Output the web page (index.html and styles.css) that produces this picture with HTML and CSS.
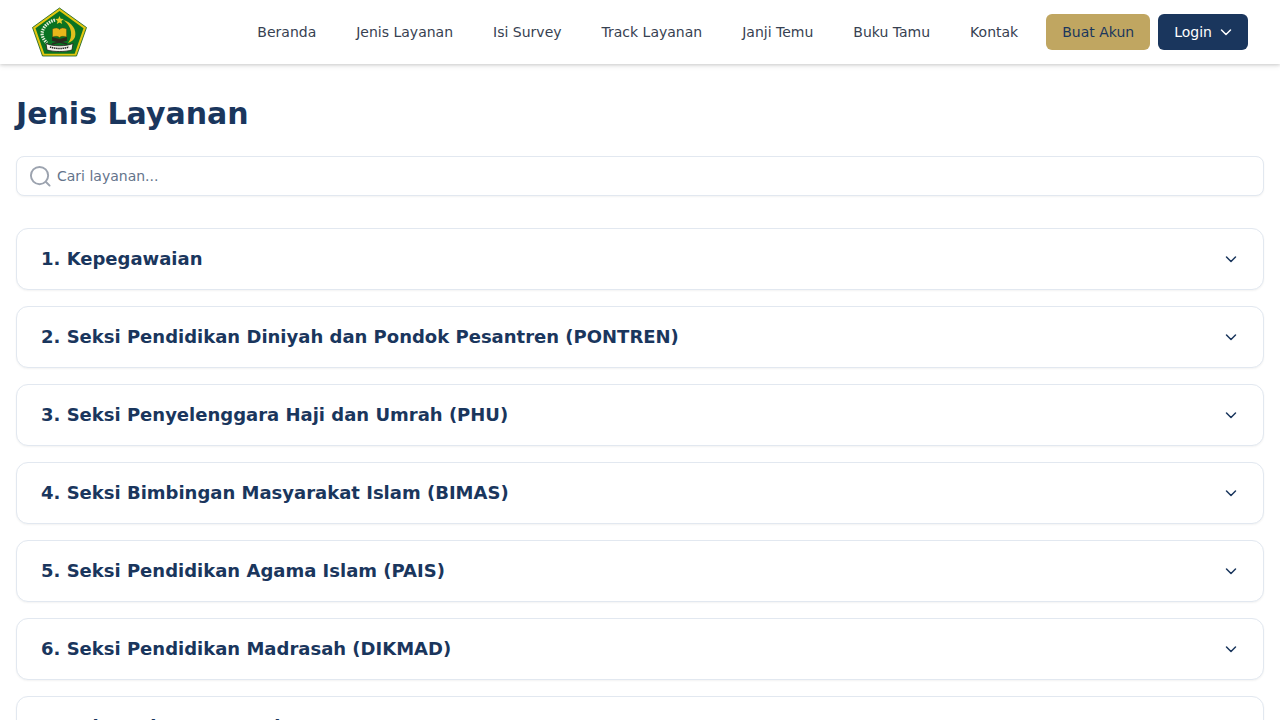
FILE: index.html
```html
<!DOCTYPE html>
<html lang="id">
<head>
<meta charset="utf-8">
<title>Jenis Layanan</title>
<link rel="stylesheet" href="styles.css">
</head>
<body>
<header class="navbar">
  <a class="logo" href="#" aria-label="Kementerian Agama">
    <svg class="logo-mark" width="56" height="50" viewBox="0 0 56 50">
      <polygon points="27.500,1 54.500,20.500 44.500,49 10.500,49 0.500,20.500" fill="#e3c60f" stroke="#0d5c1e" stroke-width="0.800"/>
      <polygon points="27.500,4 51.500,21.300 42.700,46.800 12.300,46.800 3.500,21.300" fill="#0a7322"/>
      <polygon points="27.500,9 28.700,11.800 31.800,12 29.400,14 30.200,17 27.500,15.400 24.800,17 25.600,14 23.200,12 26.300,11.800" fill="#e8cf2a"/>
      <path d="M31 13 C40 15 45 23 43 30 C42 33 39 35 36 36 C38.500 33 39.500 29 39 25 C38.500 20 35 15.500 31 13Z" fill="#e0c01e"/>
      <path d="M23 13 C16 15 11 20 10 26 C10 30 12 33 15 36" fill="none" stroke="#e8f0dc" stroke-width="3.200" stroke-dasharray="1.500 1"/>
      <path d="M20.500 22 C23 20.500 26 20.500 27.500 22.500 C29 20.500 32 20.500 34.500 22 L34.500 30 C32 29 29 29 27.500 30.500 C26 29 23 29 20.500 30Z" fill="#e9b71a" stroke="#5a4a10" stroke-width="0.500"/>
      <path d="M20 30 L27.500 32 L35 30 L35 32.500 L27.500 35 L20 32.500Z" fill="#2c2a1a"/>
      <path d="M20 33 L35 37 M35 33 L20 37" stroke="#2a2a20" stroke-width="1.300"/>
      <path d="M14 36.500 C21 39.500 34 39.500 41 36.500 L40 43 C33 45 22 45 15 43Z" fill="#f4f4ec" stroke="#1c1c14" stroke-width="0.800"/>
      <path d="M18 40 C24 42 31 42 37 40" fill="none" stroke="#222" stroke-width="1.500" stroke-dasharray="1.400 0.700"/>
    </svg>
  </a>
  <nav class="nav">
    <a class="nav-link" href="#">Beranda</a>
    <a class="nav-link" href="#">Jenis Layanan</a>
    <a class="nav-link" href="#">Isi Survey</a>
    <a class="nav-link" href="#">Track Layanan</a>
    <a class="nav-link" href="#">Janji Temu</a>
    <a class="nav-link" href="#">Buku Tamu</a>
    <a class="nav-link" href="#">Kontak</a>
  </nav>
  <div class="actions">
    <a class="btn btn-gold" href="#">Buat Akun</a>
    <a class="btn btn-navy" href="#">Login
      <svg class="btn-chevron" width="12" height="12" viewBox="0 0 24 24" fill="none" stroke="currentColor" stroke-width="3" stroke-linecap="round" stroke-linejoin="round"><path d="M3 8l9 9 9-9"/></svg>
    </a>
  </div>
</header>
<main class="page">
  <h1 class="title">Jenis Layanan</h1>
  <label class="search">
    <svg class="search-icon" width="23" height="23" viewBox="0 0 24 24" fill="none" stroke="#9ca3af" stroke-width="2" stroke-linecap="round"><circle cx="11" cy="11" r="9"/><path d="M18 18l3.500 3.500"/></svg>
    <input class="search-input" type="text" placeholder="Cari layanan...">
  </label>
  <section class="list">
    <div class="item"><span>1. Kepegawaian</span><svg class="chevron" width="12" height="12" viewBox="0 0 24 24" fill="none" stroke="#1a365d" stroke-width="3" stroke-linecap="round" stroke-linejoin="round"><path d="M3 8l9 9 9-9"/></svg></div>
    <div class="item"><span>2. Seksi Pendidikan Diniyah dan Pondok Pesantren (PONTREN)</span><svg class="chevron" width="12" height="12" viewBox="0 0 24 24" fill="none" stroke="#1a365d" stroke-width="3" stroke-linecap="round" stroke-linejoin="round"><path d="M3 8l9 9 9-9"/></svg></div>
    <div class="item"><span>3. Seksi Penyelenggara Haji dan Umrah (PHU)</span><svg class="chevron" width="12" height="12" viewBox="0 0 24 24" fill="none" stroke="#1a365d" stroke-width="3" stroke-linecap="round" stroke-linejoin="round"><path d="M3 8l9 9 9-9"/></svg></div>
    <div class="item"><span>4. Seksi Bimbingan Masyarakat Islam (BIMAS)</span><svg class="chevron" width="12" height="12" viewBox="0 0 24 24" fill="none" stroke="#1a365d" stroke-width="3" stroke-linecap="round" stroke-linejoin="round"><path d="M3 8l9 9 9-9"/></svg></div>
    <div class="item"><span>5. Seksi Pendidikan Agama Islam (PAIS)</span><svg class="chevron" width="12" height="12" viewBox="0 0 24 24" fill="none" stroke="#1a365d" stroke-width="3" stroke-linecap="round" stroke-linejoin="round"><path d="M3 8l9 9 9-9"/></svg></div>
    <div class="item"><span>6. Seksi Pendidikan Madrasah (DIKMAD)</span><svg class="chevron" width="12" height="12" viewBox="0 0 24 24" fill="none" stroke="#1a365d" stroke-width="3" stroke-linecap="round" stroke-linejoin="round"><path d="M3 8l9 9 9-9"/></svg></div>
    <div class="item"><span>7. Sub Bagian Tata Usaha</span><svg class="chevron" width="12" height="12" viewBox="0 0 24 24" fill="none" stroke="#1a365d" stroke-width="3" stroke-linecap="round" stroke-linejoin="round"><path d="M3 8l9 9 9-9"/></svg></div>
  </section>
</main>
</body>
</html>
```
FILE: styles.css
```css
* { box-sizing: border-box; }
html, body { margin: 0; padding: 0; }
body {
  background: #fff;
  color: #1a365d;
  font-family: "DejaVu Sans", sans-serif;
  overflow-x: hidden;
}
a { text-decoration: none; }
.navbar {
  display: flex;
  align-items: center;
  height: 64px;
  padding: 0 32px;
  background: #fff;
  box-shadow: 0 1px 3px rgba(0,0,0,.15), 0 2px 6px rgba(0,0,0,.08);
}
.logo { display: flex; margin-right: auto; }
.logo-mark { filter: blur(0.35px); }
.nav { display: flex; gap: 40px; margin-right: 28px; }
.nav-link { font-size: 14px; line-height: 20px; color: #374151; }
.actions { display: flex; gap: 8px; }
.btn {
  display: flex;
  align-items: center;
  gap: 8px;
  height: 36px;
  padding: 0 16px;
  border-radius: 6px;
  font-size: 14px;
}
.btn-gold { background: #c0a661; color: #1a365d; }
.btn-navy { background: #1a365d; color: #fff; }
.page { padding: 32px 16px 0; }
.title {
  margin: 0 0 24px;
  font-size: 30px;
  line-height: 36px;
  font-weight: 700;
  color: #1a365d;
}
.search {
  display: flex;
  align-items: center;
  gap: 5px;
  height: 40px;
  padding: 0 12px;
  background: #fff;
  border: 1px solid #e2e8f0;
  border-radius: 8px;
  box-shadow: 0 1px 2px rgba(0,0,0,.05);
}
.search-icon { flex: none; }
.search-input {
  flex: 1;
  border: 0;
  outline: 0;
  padding: 0;
  background: transparent;
  font: 14px "DejaVu Sans", sans-serif;
  color: #1a365d;
}
.search-input::placeholder { color: #64748b; opacity: 1; }
.list { display: flex; flex-direction: column; gap: 16px; margin-top: 32px; }
.item {
  display: flex;
  align-items: center;
  justify-content: space-between;
  height: 62px;
  padding: 0 26px 0 24px;
  background: #fff;
  border: 1px solid #e2e8f0;
  border-radius: 12px;
  box-shadow: 0 1px 2px rgba(0,0,0,.05);
  font-size: 18px;
  font-weight: 700;
  color: #1a365d;
}
.item span { padding-bottom: 2px; }
.chevron { flex: none; }
```
